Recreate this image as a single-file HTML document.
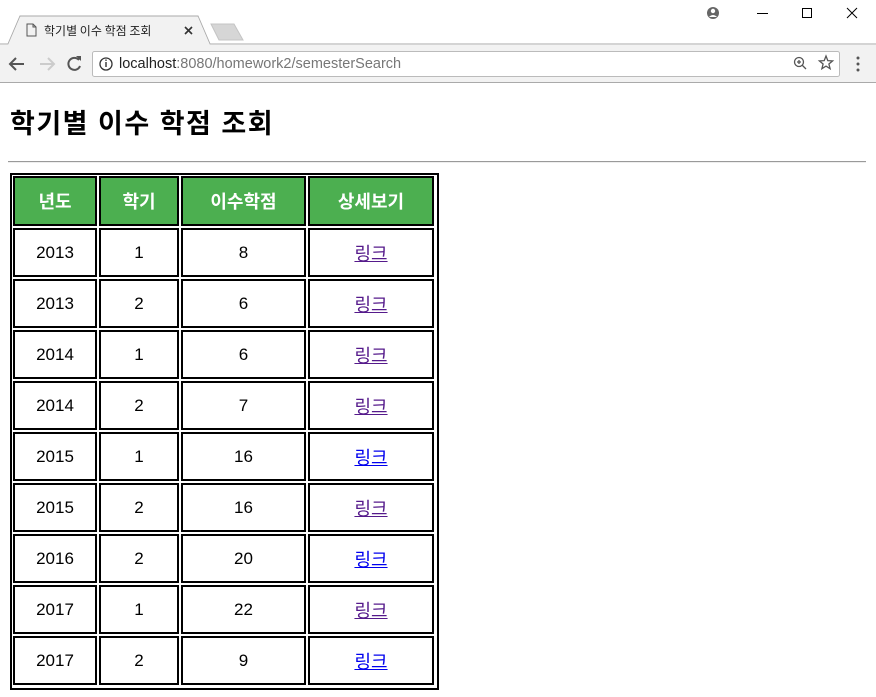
<!DOCTYPE html>
<html><head><meta charset="utf-8"><style>
*{margin:0;padding:0;box-sizing:border-box}
body{width:876px;height:697px;overflow:hidden;background:#fff;font-family:"Liberation Sans","Noto Sans CJK KR",sans-serif;position:relative}
.a{position:absolute}
.cell{position:absolute;border:2px solid #000;display:flex;align-items:center;justify-content:center;font-size:17px;color:#000}
.h{background:#4CAF50;color:#fff;font-weight:bold;font-size:18px}
.l{text-decoration:underline;font-size:18px}
</style></head><body>
<div class="a" style="left:0;top:0;width:876px;height:45px;background:#fff"></div>
<svg class="a" style="left:0;top:0" width="876" height="84">
<path d="M0 44 L8 44 L20 16 L198 16 L210 44 L876 44" fill="#f2f2f2" stroke="#aaa"/>
<rect x="0" y="45" width="876" height="37" fill="#f2f2f2"/>
<path d="M8 45 L20 17 L198 17 L210 45Z" fill="#f2f2f2"/>
<path d="M211 24 L234 24 L243 40 L219 40 Z" fill="#d6d6d6" stroke="#c4c4c4"/>
<line x1="0" y1="82.5" x2="876" y2="82.5" stroke="#aaa"/>
<path d="M27 24h6l3 3v9h-9z M33 24v3h3" fill="none" stroke="#555" stroke-width="1"/>
<path d="M185 27l7 7M192 27l-7 7" stroke="#333" stroke-width="1.6"/>
<circle cx="713" cy="13" r="6" fill="#666"/><circle cx="713" cy="11" r="2.2" fill="#fff"/><path d="M709 17q4-4 8 0" fill="#fff"/>
<line x1="757" y1="13.5" x2="768" y2="13.5" stroke="#000"/>
<rect x="802.5" y="8.5" width="9" height="9" fill="none" stroke="#000"/>
<path d="M847 8l10 10M857 8l-10 10" stroke="#000"/>
<path d="M24 64H11M16 58l-6 6 6 6" fill="none" stroke="#555" stroke-width="2"/>
<path d="M40 64h13M48 58l6 6-6 6" fill="none" stroke="#ccc" stroke-width="2"/>
<path d="M79 60a6 6 0 1 0 1 6" fill="none" stroke="#555" stroke-width="2"/><path d="M76 56l5 0 0 5z" fill="#555"/>
<rect x="92.5" y="51.5" width="747" height="25" rx="2" fill="#fff" stroke="#bbb"/>
<circle cx="106" cy="64" r="6" fill="none" stroke="#333" stroke-width="1.3"/><rect x="105.3" y="62" width="1.4" height="5" fill="#333"/><rect x="105.3" y="59.5" width="1.4" height="1.4" fill="#333"/>
<circle cx="799" cy="62" r="4.5" fill="none" stroke="#555" stroke-width="1.3"/><path d="M802 65l4 4M797 62h4M799 60v4" stroke="#555" stroke-width="1.3"/>
<path d="M826 56l1.8 4.6 4.8.3-3.7 3.1 1.2 4.7-4.1-2.6-4.1 2.6 1.2-4.7-3.7-3.1 4.8-.3z" fill="none" stroke="#555" stroke-width="1.3"/>
<circle cx="858" cy="58" r="1.5" fill="#555"/><circle cx="858" cy="64" r="1.5" fill="#555"/><circle cx="858" cy="70" r="1.5" fill="#555"/>
</svg>
<div class="a" style="left:44px;top:23px;font-size:12px;color:#222;font-family:'Noto Sans CJK KR',sans-serif;line-height:16px">학기별 이수 학점 조회</div>
<div class="a" style="left:119px;top:55px;font-size:14.5px;line-height:18px;color:#777"><span style="color:#222">localhost</span>:8080/homework2/semesterSearch</div>
<div class="a" style="left:10px;top:104px;font-size:27px;font-weight:bold;line-height:40px;letter-spacing:1.5px;white-space:nowrap">학기별 이수 학점 조회</div>
<div class="a" style="left:8px;top:161px;width:858px;height:2px;border-top:1px solid #9a9a9a;border-bottom:1px solid #eee"></div>
<div class="a" style="left:10px;top:173px;width:429px;height:517px;border:2px solid #000"></div>
<div id="t"></div>
<script>
var xs=[[13,84],[99,80],[181,125],[308,126]];
var hd=['년도','학기','이수학점','상세보기'];
var d=[[2013,1,8,0],[2013,2,6,0],[2014,1,6,0],[2014,2,7,0],[2015,1,16,1],[2015,2,16,0],[2016,2,20,1],[2017,1,22,0],[2017,2,9,1]];
var h='';
for(var i=0;i<4;i++)h+='<div class="cell h" style="left:'+xs[i][0]+'px;top:176px;width:'+xs[i][1]+'px;height:50px">'+hd[i]+'</div>';
for(var r=0;r<9;r++){var y=228+r*51;for(var i=0;i<4;i++){var c=i<3?d[r][i]:'<span class="l" style="color:'+(d[r][3]?'#0000EE':'#551A8B')+'">링크</span>';h+='<div class="cell" style="left:'+xs[i][0]+'px;top:'+y+'px;width:'+xs[i][1]+'px;height:49px">'+c+'</div>';}}
document.getElementById('t').innerHTML=h;
</script>
</body></html>
